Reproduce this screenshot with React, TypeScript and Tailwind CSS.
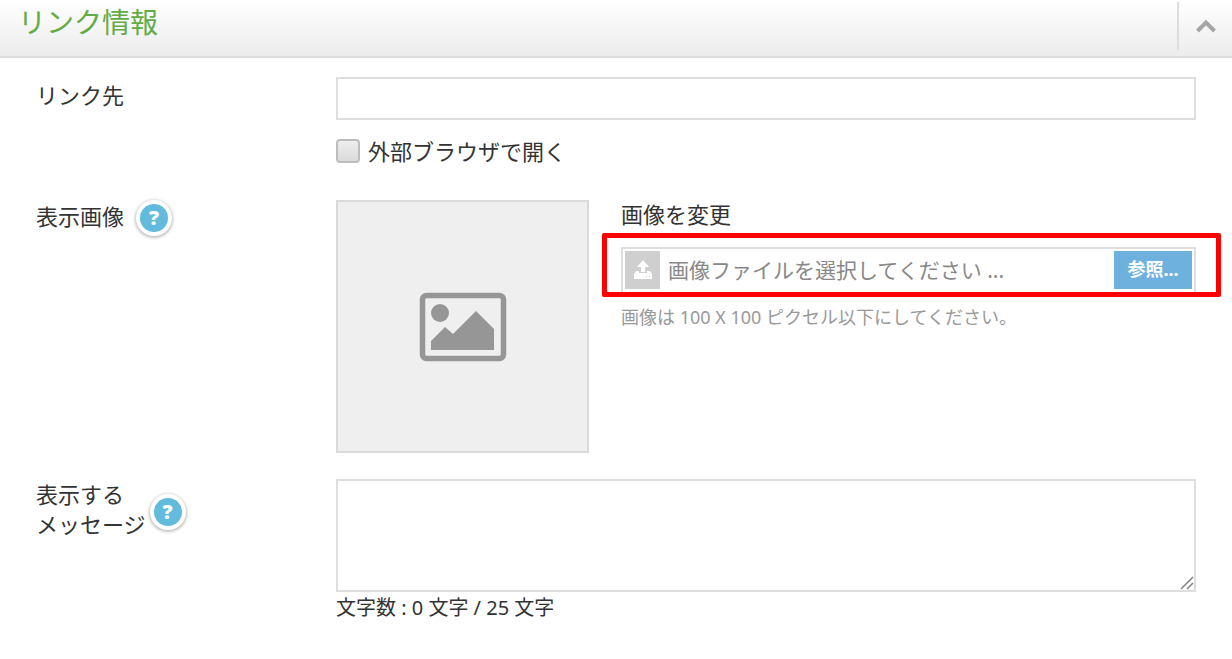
import { useRef, useState } from 'react';

const MAX_MESSAGE_LENGTH = 25;

/**
 * ヘルプボタン
 */
function HelpButton({ label }: { label: string }) {
  return (
    <button
      type="button"
      aria-label={label}
      className="flex size-9 shrink-0 cursor-pointer items-center justify-center rounded-full bg-white shadow-[0_1px_3px_1px_rgba(0,0,0,0.25)]"
    >
      <span className="flex size-7 items-center justify-center rounded-full bg-[#62bbdc] font-['Noto_Sans',sans-serif] text-xl font-black text-white">
        ?
      </span>
    </button>
  );
}

function ImageIcon() {
  return (
    <svg viewBox="0 0 88 70" className="w-[88px]" fill="#969696" aria-hidden="true">
      <rect x="3.5" y="3.5" width="81" height="63" rx="4" fill="none" stroke="#969696" strokeWidth="5.5" />
      <circle cx="21" cy="21" r="9" />
      <path d="M12 58V49L26 35L34 42L57 19L75 37V58Z" />
    </svg>
  );
}

function UploadIcon() {
  return (
    <svg viewBox="0 0 20 20" className="w-5" fill="#ffffff" aria-hidden="true">
      <path d="M10 0L16 7H12V12H8V7H4Z" />
      <path
        fillRule="evenodd"
        d="M3 11H6V13H14V11H17L19 14V19H1V14ZM13 16V17H14V16ZM16 16V17H17V16Z"
      />
    </svg>
  );
}

export default function App() {
  const [open, setOpen] = useState(true);
  const [message, setMessage] = useState('');
  const [fileName, setFileName] = useState('');
  const fileRef = useRef<HTMLInputElement>(null);

  return (
    <section className="bg-white font-['Noto_Sans','Noto_Sans_CJK_JP',sans-serif] text-[22px] leading-8 text-[#333333]">
      {/* 見出し */}
      <header className="flex h-[58px] items-start justify-between border-b-2 border-[#dddddd] bg-linear-to-b from-white to-[#ececec] pl-[18px]">
        <h2 className="pt-0.5 text-[28px] leading-10 font-normal text-[#62ac44]">リンク情報</h2>
        <button
          type="button"
          aria-label="開閉"
          aria-expanded={open}
          onClick={() => setOpen(!open)}
          className="mt-0.5 flex h-12 w-[55px] cursor-pointer items-center justify-center border-l-2 border-[#dddddd]"
        >
          <svg viewBox="0 0 20 14" className="w-5" fill="none" aria-hidden="true">
            <path d="M1.5 12L10 3.5L18.5 12" stroke="#a6a6a6" strokeWidth="4" />
          </svg>
        </button>
      </header>

      {open && (
        <div className="flex flex-col px-9 pt-[19px]">
          {/* リンク先 */}
          <div className="flex">
            <label htmlFor="link" className="w-[300px] shrink-0 pt-0.5">
              リンク先
            </label>
            <div className="min-w-0 flex-1">
              <input
                id="link"
                type="text"
                className="block h-[43px] w-full border-2 border-[#dedede] bg-white px-2 outline-none focus:border-[#62bbdc]"
              />
              <div className="mt-[15px] flex items-center gap-2">
                <input
                  id="external"
                  type="checkbox"
                  className="size-6 shrink-0 appearance-none rounded border-2 border-[#bcbcbc] bg-linear-to-b from-[#eeeeee] to-[#dadada] checked:bg-[#62bbdc] checked:bg-none"
                />
                <label htmlFor="external">外部ブラウザで開く</label>
              </div>
            </div>
          </div>

          {/* 表示画像 */}
          <div className="mt-[33px] flex">
            <div className="flex w-[300px] shrink-0 items-start gap-3">
              <span>表示画像</span>
              <HelpButton label="表示画像のヘルプ" />
            </div>
            <div className="flex min-w-0 flex-1 gap-8">
              <div className="flex size-[253px] shrink-0 items-center justify-center border-2 border-[#dadada] bg-[#efefef]">
                <ImageIcon />
              </div>
              <div className="min-w-0 flex-1">
                <label htmlFor="fileName" className="block leading-7">
                  画像を変更
                </label>
                <div className="relative mt-[19px] flex h-12 items-start gap-2 border-2 border-[#dedede] p-0.5">
                  <span className="flex h-[38px] w-[35px] shrink-0 items-center justify-center bg-[#cfcfcf]">
                    <UploadIcon />
                  </span>
                  <input
                    id="fileName"
                    type="text"
                    readOnly
                    value={fileName}
                    placeholder="画像ファイルを選択してください ..."
                    className="h-[38px] min-w-0 flex-1 text-[21px] outline-none placeholder:text-[#888888]"
                  />
                  <input
                    ref={fileRef}
                    type="file"
                    accept="image/*"
                    aria-label="画像ファイル"
                    className="hidden"
                    onChange={(e) => setFileName(e.target.files?.[0]?.name ?? '')}
                  />
                  <button
                    type="button"
                    onClick={() => fileRef.current?.click()}
                    className="h-[38px] w-[78px] shrink-0 cursor-pointer bg-[#6eb1df] pb-0.5 text-lg font-bold text-white"
                  >
                    参照...
                  </button>
                  {/* 強調枠 */}
                  <div className="pointer-events-none absolute -top-4 -right-[27px] -bottom-1 -left-[21px] rounded-xs border-5 border-[#ff0000]" />
                </div>
                <p className="mt-2 text-lg text-[#999999]">
                  画像は 100 X 100 ピクセル以下にしてください。
                </p>
              </div>
            </div>
          </div>

          {/* 表示するメッセージ */}
          <div className="mt-[26px] flex">
            <div className="flex w-[300px] shrink-0 items-start gap-1">
              <label htmlFor="message" className="leading-[30px]">
                表示する
                <br />
                メッセージ
              </label>
              <div className="pt-[15px]">
                <HelpButton label="表示するメッセージのヘルプ" />
              </div>
            </div>
            <div className="min-w-0 flex-1">
              <div className="relative">
                <textarea
                  id="message"
                  value={message}
                  maxLength={MAX_MESSAGE_LENGTH}
                  onChange={(e) => setMessage(e.target.value)}
                  className="block h-[113px] w-full resize-none border-2 border-[#dedede] bg-white p-2 outline-none focus:border-[#62bbdc]"
                />
                <svg
                  viewBox="0 0 14 14"
                  className="pointer-events-none absolute right-0.5 bottom-0.5 w-3.5"
                  stroke="#808080"
                  strokeWidth="1.5"
                  aria-hidden="true"
                >
                  <path d="M1 13L13 1M7 13L13 7" />
                </svg>
              </div>
              <p className="text-xl leading-8">
                文字数 : {message.length} 文字 / {MAX_MESSAGE_LENGTH} 文字
              </p>
            </div>
          </div>
        </div>
      )}
    </section>
  );
}
